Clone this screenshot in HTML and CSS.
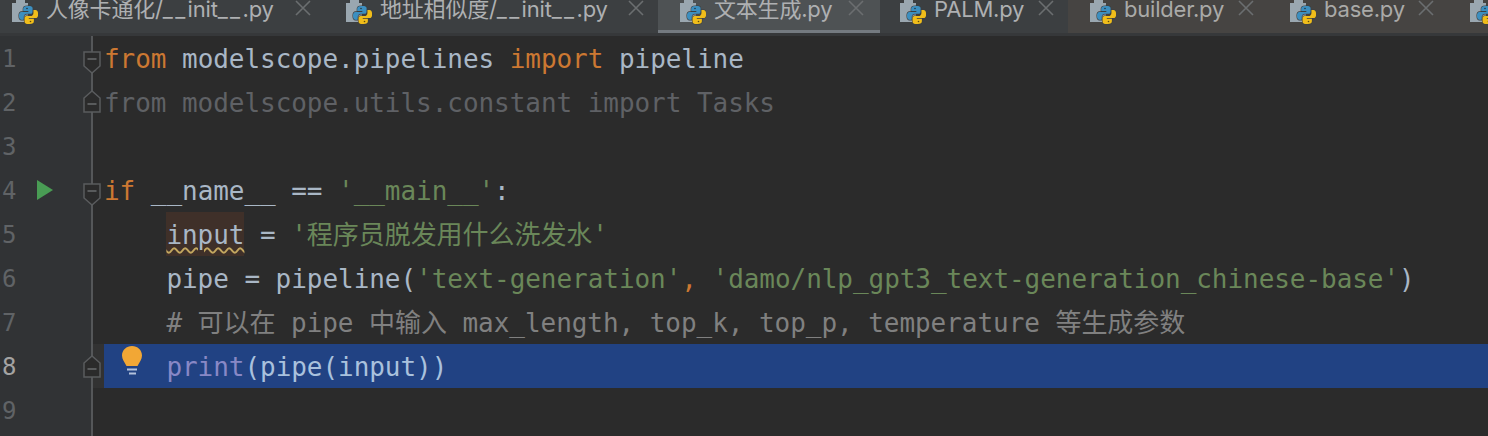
FILE: index.html
```html
<!DOCTYPE html>
<html lang="zh">
<head>
<meta charset="utf-8">
<title>文本生成.py</title>
<link rel="stylesheet" href="styles.css">
</head>
<body>
<svg class="defs" width="0" height="0" aria-hidden="true">
  <defs>
    <symbol id="py" viewBox="0 0 26 26">
      <path d="M0 3h4V0h9v3h3v19H0z" fill="#9aa7b0"/>
      <g transform="translate(5.300 0) scale(.85 .92)" stroke="#3c3f41" stroke-width="1.300" paint-order="stroke">
        <path d="M12 6.500c-3.500 0-5 1-5 3v2.500h6v1H5c-2 0-3 1.500-3 4s1 4.500 3 4.500h2.500v-3c0-2 1.500-3.500 3.500-3.500h4.500c1.500 0 2.500-1 2.500-2.500v-3.500c0-1.500-1.500-2.500-3-2.500z" fill="#3c8fc0"/>
        <path d="M14.500 26c3.500 0 5-1 5-3v-2.500h-6v-1h8c2 0 3-1.500 3-4s-1-4.500-3-4.500H19v3c0 2-1.500 3.500-3.500 3.500H11c-1.500 0-2.500 1-2.500 2.500v3.500c0 1.500 1.500 2.500 3 2.500z" fill="#f0bd1a"/>
      </g>
      <circle cx="15" cy="8.500" r=".8" fill="#26343c"/>
      <circle cx="18.500" cy="21.500" r=".8" fill="#5a4a10"/>
    </symbol>
    <symbol id="close" viewBox="0 0 16 16">
      <path d="M1 1l14 14M15 1L1 15" stroke="#6b6e70" stroke-width="1.600" fill="none"/>
    </symbol>
    <symbol id="fold-down" viewBox="0 0 18 23">
      <path d="M1 1h16v14l-8 7-8-7z" fill="#2b2b2b" stroke="#5a5c5e" stroke-width="1.500"/>
      <path d="M4.500 8h9" stroke="#6a6c6e" stroke-width="1.500"/>
    </symbol>
    <symbol id="fold-up" viewBox="0 0 18 23">
      <path d="M1 22h16V8L9 1 1 8z" fill="#2b2b2b" stroke="#5a5c5e" stroke-width="1.500"/>
      <path d="M4.500 14h9" stroke="#6a6c6e" stroke-width="1.500"/>
    </symbol>
  </defs>
</svg>

<nav class="tabs">
  <div class="tab tab-first"><svg class="ico"><use href="#py"/></svg><span class="tab-label">人像卡通化/<span class="us">__</span>init<span class="us">__</span>.py</span><svg class="x"><use href="#close"/></svg></div>
  <div class="tab tab-second"><svg class="ico"><use href="#py"/></svg><span class="tab-label">地址相似度/<span class="us">__</span>init<span class="us">__</span>.py</span><svg class="x"><use href="#close"/></svg></div>
  <div class="tab tab-active"><svg class="ico"><use href="#py"/></svg><span class="tab-label">文本生成.py</span><svg class="x"><use href="#close"/></svg></div>
  <div class="tab tab-palm"><svg class="ico"><use href="#py"/></svg><span class="tab-label">PALM.py</span><svg class="x"><use href="#close"/></svg></div>
  <div class="tab tab-warm tab-builder"><svg class="ico"><use href="#py"/></svg><span class="tab-label">builder.py</span><svg class="x"><use href="#close"/></svg></div>
  <div class="tab tab-warm tab-base"><svg class="ico"><use href="#py"/></svg><span class="tab-label">base.py</span><svg class="x"><use href="#close"/></svg></div>
  <div class="tab tab-warm tab-rest"><svg class="ico"><use href="#py"/></svg></div>
</nav>

<main class="editor">
  <div class="row">
    <div class="gutter"><span class="num">1</span><svg class="fold"><use href="#fold-down"/></svg></div>
    <div class="code"><span class="kw">from</span> modelscope.pipelines <span class="kw">import</span> pipeline</div>
  </div>
  <div class="row">
    <div class="gutter"><span class="num">2</span><svg class="fold fold-low"><use href="#fold-up"/></svg></div>
    <div class="code dim">from modelscope.utils.constant import Tasks</div>
  </div>
  <div class="row">
    <div class="gutter"><span class="num">3</span></div>
    <div class="code"></div>
  </div>
  <div class="row">
    <div class="gutter"><span class="num">4</span><svg class="run" viewBox="0 0 16 20"><path d="M0 0l16 10L0 20z" fill="#499c54"/></svg><svg class="fold"><use href="#fold-down"/></svg></div>
    <div class="code"><span class="kw">if</span> __name__ == <span class="str">'__main__'</span>:</div>
  </div>
  <div class="row">
    <div class="gutter"><span class="num">5</span></div>
    <div class="code"><span class="indent"></span><span class="warn">input</span> = <span class="str">'程序员脱发用什么洗发水'</span></div>
  </div>
  <div class="row">
    <div class="gutter"><span class="num">6</span></div>
    <div class="code"><span class="indent"></span>pipe = pipeline(<span class="str">'text-generation'</span><span class="kw">,</span> <span class="str">'damo/nlp_gpt3_text-generation_chinese-base'</span>)</div>
  </div>
  <div class="row">
    <div class="gutter"><span class="num">7</span></div>
    <div class="code dim"><span class="indent"></span><span class="cm"># 可以在 pipe 中输入 max_length, top_k, top_p, temperature 等生成参数</span></div>
  </div>
  <div class="row row-current">
    <div class="gutter"><span class="num">8</span><svg class="fold fold-cur"><use href="#fold-up"/></svg></div>
    <div class="caret-strip"></div>
    <div class="code code-selected"><svg class="bulb" viewBox="0 0 20 30"><path d="M10 0C4.500 0 0 4 0 9.500c0 4 2.500 6.500 4.500 10.500h11c2-4 4.500-6.500 4.500-10.500C20 4 15.500 0 10 0z" fill="#f2a735"/><path d="M5 23.500h10M7 27.500h7" stroke="#b4c2dc" stroke-width="2" fill="none"/></svg><span class="indent"></span><span class="builtin">print</span>(pipe(input))</div>
  </div>
  <div class="row">
    <div class="gutter"><span class="num">9</span></div>
    <div class="code"></div>
  </div>
  <div class="row row-tail">
    <div class="gutter"></div>
    <div class="code"></div>
  </div>
</main>
</body>
</html>
```
FILE: styles.css
```css
html, body { margin: 0; padding: 0; }
body { width: 1488px; height: 436px; overflow: hidden; background: #2b2b2b; }
.defs { display: block; height: 0; }

.tabs {
  display: flex;
  height: 33px;
  overflow: hidden;
  background: #3c3f41;
  border-bottom: 3px solid #36383a;
  font-family: "Inter", "Noto Sans CJK SC", sans-serif;
  font-size: 22px;
  letter-spacing: -0.2px;
  color: #aeb0b2;
}
.tab { display: flex; flex: none; align-items: flex-start; height: 33px; position: relative; box-sizing: border-box; }
.ico { width: 26px; height: 26px; flex: none; }
.tab-label { white-space: nowrap; margin-left: 8px; line-height: 26px; margin-top: -4px; }
.us { letter-spacing: 2.400px; }
.x { width: 16px; height: 16px; flex: none; position: absolute; top: 0; }
.tab-first { width: 325px; padding-left: 12px; }
.tab-first .x { left: 295px; }
.tab-second { width: 333px; padding-left: 21px; }
.tab-second .x { left: 303px; }
.tab-active { width: 222px; padding-left: 22px; background: #4e5254; height: 36px; border-bottom: 6px solid #747a80; }
.tab-active .x { left: 190px; }
.tab-palm { width: 188px; padding-left: 20px; }
.tab-palm .x { left: 158px; }
.tab-warm { background: #464442; color: #aaaaa8; }
.tab-builder { width: 200px; padding-left: 22px; }
.tab-builder .x { left: 170px; }
.tab-base { width: 200px; padding-left: 22px; }
.tab-base .x { left: 150px; }
.tab-rest { flex: 1; padding-left: 2px; }

.editor {
  font-family: "DejaVu Sans Mono", "Noto Sans CJK SC", monospace;
  font-size: 26px;
  letter-spacing: -0.05px;
  color: #a9b7c6;
}
.row { display: flex; height: 44px; line-height: 46px; white-space: pre; }
.row-tail { height: 4px; overflow: hidden; }
.gutter {
  width: 91px; flex: none; position: relative;
  background: #313335;
  border-right: 2px solid #555759;
  margin-right: 11px;
  color: #606366;
}
.num { display: block; margin-left: 2px; font-size: 24px; }
.fold { position: absolute; left: 83px; top: 15px; width: 18px; height: 23px; }
.fold-low { top: 10px; }
.fold-cur { top: 11px; }
.run { position: absolute; left: 37px; top: 12px; width: 16px; height: 20px; }
.code { flex: 1; min-width: 0; }
.indent { display: inline-block; width: 62.400px; height: 1px; }
.kw { color: #cc7832; }
.str { color: #6a8759; }
.dim { color: #5f6165; }
.cm { color: #808080; }
.warn {
  display: inline-block;
  height: 44px;
  line-height: 46px;
  background: #3f3029;
  text-decoration: underline wavy #c3a75f 1.500px;
  text-underline-offset: 3px;
}
.row-current .gutter { margin-right: 0; }
.row-current .num { color: #a4a3a3; }
.caret-strip { width: 11px; flex: none; background: #323232; }
.code-selected { background: #214283; position: relative; color: #a9c1dd; }
.builtin { color: #8888c6; }
.bulb { position: absolute; left: 18px; top: 2px; width: 20px; height: 30px; }
```
